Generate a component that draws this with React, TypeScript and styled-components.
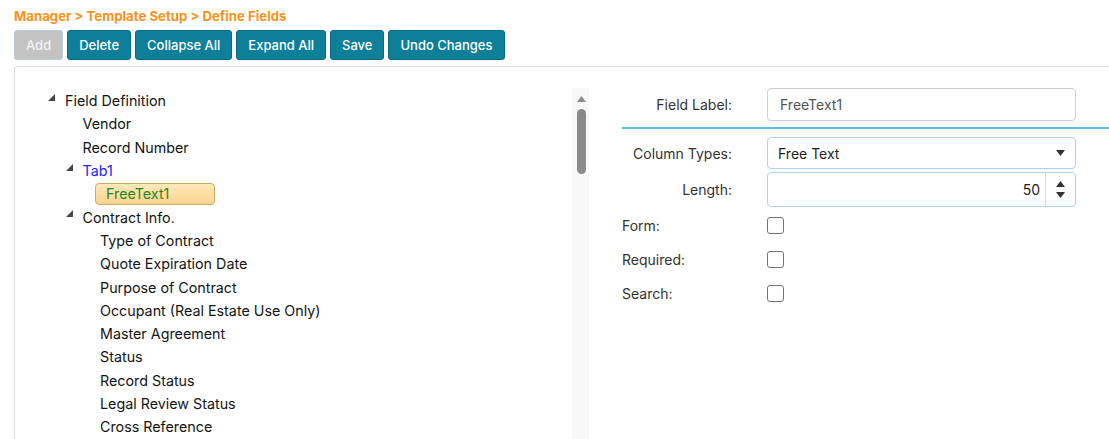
import React from "react";
import styled, { createGlobalStyle } from "styled-components";

const GlobalStyle = createGlobalStyle`
    html, body {
        margin: 0;
        padding: 0;
        background: #ffffff;
        overflow: hidden;
    }
    body {
        font-family: Inter, "Noto Sans", "Liberation Sans", sans-serif;
        color: #1a1a1a;
    }
`;

interface TreeItem {
    label: string;
    tone?: "tab";
    selected?: boolean;
    children?: TreeItem[];
}

const fields: TreeItem[] = [
    {
        label: "Field Definition",
        children: [
            { label: "Vendor" },
            { label: "Record Number" },
            { label: "Tab1", tone: "tab", children: [{ label: "FreeText1", selected: true }] },
            {
                label: "Contract Info.",
                children: [
                    { label: "Type of Contract" },
                    { label: "Quote Expiration Date" },
                    { label: "Purpose of Contract" },
                    { label: "Occupant (Real Estate Use Only)" },
                    { label: "Master Agreement" },
                    { label: "Status" },
                    { label: "Record Status" },
                    { label: "Legal Review Status" },
                    { label: "Cross Reference" },
                ],
            },
        ],
    },
];

const Page = styled.div`
    padding: 8px 0 0 14px;
`;

const Breadcrumb = styled.div`
    font-size: 13.2px;
    font-weight: 700;
    line-height: 16px;
    color: #f7941d;
    margin-bottom: 6px;
`;

const Toolbar = styled.div`
    display: flex;
    gap: 4px;
    height: 30px;
    margin-bottom: 6px;
`;

const Button = styled.button<{ $disabled?: boolean }>`
    height: 30px;
    padding: 0 11px;
    border-radius: 3px;
    border: 1px solid ${p => (p.$disabled ? "#b9cdd3" : "#0a6b80")};
    background: ${p => (p.$disabled ? "#c3c3c3" : "#0d7f98")};
    color: ${p => (p.$disabled ? "#f2f2f2" : "#ffffff")};
    font-family: inherit;
    font-size: 13px;
    font-weight: 500;
    cursor: pointer;
`;

const Panel = styled.div`
    display: flex;
    height: 373px;
    border: 1px solid #dddddd;
    border-right: none;
    border-bottom: none;
    border-radius: 4px 0 0 0;
`;

const TreePane = styled.div`
    width: 574px;
    padding-top: 21px;
    display: flex;
`;

const TreeList = styled.div`
    flex: 1;
    padding-top: 1px;
    font-size: 14.3px;
    color: #141414;
`;

const Row = styled.div<{ $level: number }>`
    display: flex;
    align-items: center;
    height: 23.3px;
    padding-left: ${p => 32 + p.$level * 17.5}px;
`;

const Toggle = styled.span`
    width: 18px;
    height: 100%;
    flex: none;
    > svg {
        display: block;
        margin: 4.7px 0 0 1px;
    }
`;

const Label = styled.span<{ $tone?: "tab"; $selected?: boolean }>`
    white-space: nowrap;
    color: ${p => (p.$selected ? "#27881f" : p.$tone === "tab" ? "#2323f5" : "#141414")};
    ${p =>
        p.$selected &&
        `
        margin-left: -5px;
        padding-left: 10px;
        min-width: 108px;
        height: 20px;
        line-height: 20px;
        border: 1px solid #cfa96b;
        border-radius: 4px;
        background: linear-gradient(#ffe9bb, #fcd38e);
    `}
`;

const ScrollTrack = styled.div`
    width: 17px;
    background: #f8f8f8;
    display: flex;
    flex-direction: column;
    align-items: center;
    padding-top: 8px;
    > svg {
        display: block;
        margin-left: 1px;
    }
`;

const ScrollThumb = styled.div`
    width: 9px;
    height: 65px;
    margin: 7px 0 0 1px;
    border-radius: 5px;
    background: #8b8b8b;
`;

const FormPane = styled.div`
    flex: 1;
    padding-top: 21px;
    padding-left: 33px;
    font-size: 14px;
    color: #333333;
`;

const FormRow = styled.div<{ $height: number; $gap?: number }>`
    display: grid;
    grid-template-columns: 110px 309px;
    column-gap: 35px;
    align-items: center;
    height: ${p => p.$height}px;
    margin-top: ${p => p.$gap || 0}px;
`;

const FieldName = styled.label<{ $left?: boolean }>`
    text-align: ${p => (p.$left ? "left" : "right")};
    white-space: nowrap;
`;

const Divider = styled.div`
    height: 2px;
    background: #5bbfdc;
    margin: 6px 0 8px;
`;

const TextBox = styled.div<{ $focus?: boolean }>`
    box-sizing: border-box;
    height: 100%;
    display: flex;
    align-items: center;
    border: 1px solid ${p => (p.$focus ? "#aed4e8" : "#cfcfcf")};
    border-radius: 4px;
    background: #ffffff;
`;

const BoxText = styled.span<{ $muted?: boolean; $right?: boolean }>`
    flex: 1;
    padding: 0 ${p => (p.$right ? "5px" : "10px")} 0 ${p => (p.$muted ? "12px" : "10px")};
    text-align: ${p => (p.$right ? "right" : "left")};
    color: ${p => (p.$muted ? "#555555" : "#1e1e1e")};
`;

const Caret = styled.span`
    width: 30px;
    display: flex;
    justify-content: center;
`;

const Spinner = styled.span`
    width: 29px;
    height: 100%;
    border-left: 1px solid #cfdfe8;
    display: flex;
    flex-direction: column;
    align-items: center;
    justify-content: center;
    gap: 5px;
`;

const Check = styled.span`
    box-sizing: border-box;
    width: 17px;
    height: 17px;
    border: 1px solid #757575;
    border-radius: 3px;
    background: #ffffff;
`;

const Tri = ({ dir, color = "#333" }: { dir: "up" | "down"; color?: string }) => (
    <svg width="9" height="6" viewBox="0 0 9 6">
        <polygon points={dir === "up" ? "0,6 4.5,0 9,6" : "0,0 9,0 4.5,6"} fill={color} />
    </svg>
);

function flatten(items: TreeItem[], level: number): { item: TreeItem; level: number }[] {
    return items.flatMap(item => [
        { item, level },
        ...(item.children ? flatten(item.children, level + 1) : []),
    ]);
}

function FieldTree() {
    return (
        <TreeList>
            {flatten(fields, 0).map(({ item, level }) => (
                <Row key={item.label} $level={level}>
                    <Toggle>
                        {item.children && (
                            <svg width="7" height="7" viewBox="0 0 7 7">
                                <polygon points="7,0 7,7 0,7" fill="#474747" />
                            </svg>
                        )}
                    </Toggle>
                    <Label $tone={item.tone} $selected={item.selected}>
                        {item.label}
                    </Label>
                </Row>
            ))}
        </TreeList>
    );
}

export default function App() {
    return (
        <Page>
            <GlobalStyle />
            <Breadcrumb>Manager &gt; Template Setup &gt; Define Fields</Breadcrumb>
            <Toolbar>
                <Button $disabled>Add</Button>
                <Button>Delete</Button>
                <Button>Collapse All</Button>
                <Button>Expand All</Button>
                <Button>Save</Button>
                <Button>Undo Changes</Button>
            </Toolbar>
            <Panel>
                <TreePane>
                    <FieldTree />
                    <ScrollTrack>
                        <svg width="9" height="6" viewBox="0 0 9 6">
                            <polygon points="0,6 4.5,0 9,6" fill="#8b8b8b" />
                        </svg>
                        <ScrollThumb />
                    </ScrollTrack>
                </TreePane>
                <FormPane>
                    <FormRow $height={33}>
                        <FieldName>Field Label:</FieldName>
                        <TextBox>
                            <BoxText $muted>FreeText1</BoxText>
                        </TextBox>
                    </FormRow>
                    <Divider />
                    <FormRow $height={32}>
                        <FieldName>Column Types:</FieldName>
                        <TextBox $focus>
                            <BoxText>Free Text</BoxText>
                            <Caret>
                                <Tri dir="down" />
                            </Caret>
                        </TextBox>
                    </FormRow>
                    <FormRow $height={35} $gap={3}>
                        <FieldName>Length:</FieldName>
                        <TextBox $focus>
                            <BoxText $right>50</BoxText>
                            <Spinner>
                                <Tri dir="up" />
                                <Tri dir="down" />
                            </Spinner>
                        </TextBox>
                    </FormRow>
                    <FormRow $height={34} $gap={1}>
                        <FieldName $left>Form:</FieldName>
                        <Check />
                    </FormRow>
                    <FormRow $height={34}>
                        <FieldName $left>Required:</FieldName>
                        <Check />
                    </FormRow>
                    <FormRow $height={34}>
                        <FieldName $left>Search:</FieldName>
                        <Check />
                    </FormRow>
                </FormPane>
            </Panel>
        </Page>
    );
}
